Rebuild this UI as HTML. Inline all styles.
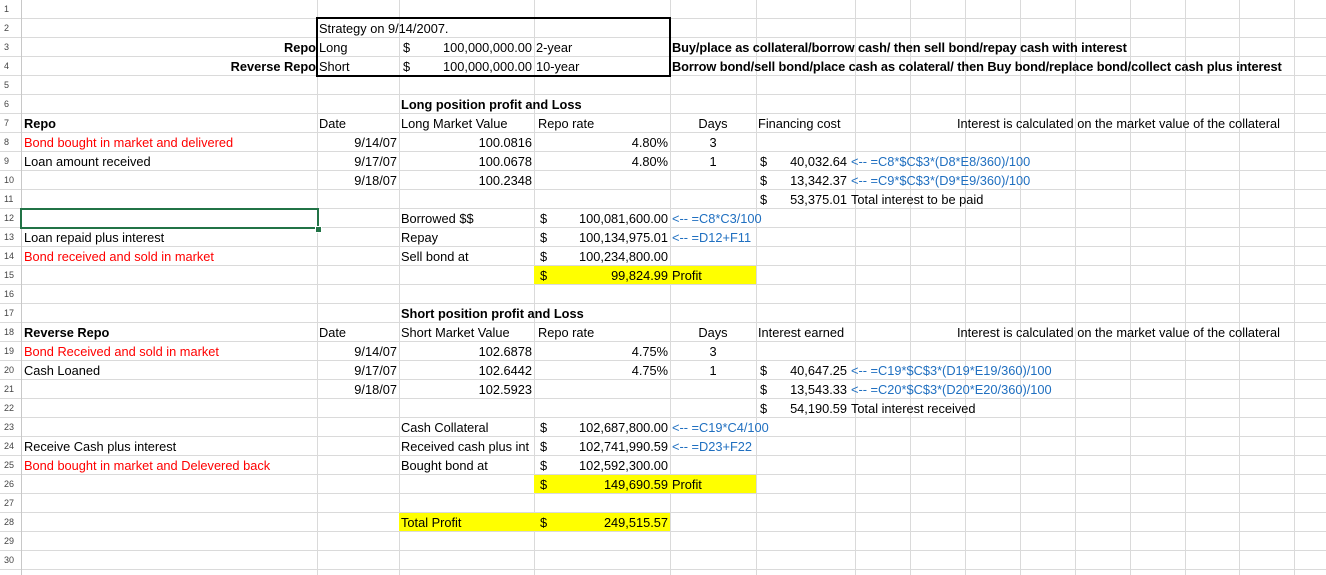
<!DOCTYPE html>
<html><head><meta charset="utf-8"><style>
body{margin:0;width:1326px;height:575px;overflow:hidden;background:#fff;font-family:"Liberation Sans",sans-serif;font-size:12.8px;color:#000;position:relative}
#g{position:absolute;left:0;top:0;width:1326px;height:575px;background-image:linear-gradient(to bottom,transparent 18px,#dadada 18px);background-size:100% 19px}
.v{position:absolute;top:0;width:1px;height:575px;background:#dadada}
.c{position:absolute;height:19px;line-height:19px;white-space:nowrap}
.r{text-align:right}.m{text-align:center}
.b{font-weight:bold}.red{color:#f00}.bl{color:#1f6fc0}
.n{position:absolute;left:4px;height:19px;line-height:19px;font-size:9px;color:#444}
.y{position:absolute;height:18px;background:#ffff00}
</style></head><body>
<div id="g"></div>
<div class="v" style="left:21px;background:#c8c8c8"></div>
<div class="v" style="left:317px"></div><div class="v" style="left:399px"></div><div class="v" style="left:534px"></div><div class="v" style="left:670px"></div><div class="v" style="left:756px"></div><div class="v" style="left:855px"></div><div class="v" style="left:910px"></div><div class="v" style="left:965px"></div><div class="v" style="left:1020px"></div><div class="v" style="left:1075px"></div><div class="v" style="left:1130px"></div><div class="v" style="left:1185px"></div><div class="v" style="left:1239px"></div><div class="v" style="left:1294px"></div>

<div class="y" style="left:534px;width:222px;top:266px"></div>
<div class="y" style="left:534px;width:222px;top:475px"></div>
<div class="y" style="left:399px;width:271px;top:513px"></div>

<div style="position:absolute;left:316px;top:17px;width:351px;height:56px;border:2px solid #000"></div>
<div style="position:absolute;left:20px;top:208px;width:295px;height:17px;border:2px solid #217346"></div>
<div style="position:absolute;left:315px;top:226px;width:5px;height:5px;background:#217346;border:1px solid #fff"></div>

<div class="n" style="top:0">1</div><div class="n" style="top:19px">2</div><div class="n" style="top:38px">3</div><div class="n" style="top:57px">4</div><div class="n" style="top:76px">5</div><div class="n" style="top:95px">6</div><div class="n" style="top:114px">7</div><div class="n" style="top:133px">8</div><div class="n" style="top:152px">9</div><div class="n" style="top:171px">10</div><div class="n" style="top:190px">11</div><div class="n" style="top:209px">12</div><div class="n" style="top:228px">13</div><div class="n" style="top:247px">14</div><div class="n" style="top:266px">15</div><div class="n" style="top:285px">16</div><div class="n" style="top:304px">17</div><div class="n" style="top:323px">18</div><div class="n" style="top:342px">19</div><div class="n" style="top:361px">20</div><div class="n" style="top:380px">21</div><div class="n" style="top:399px">22</div><div class="n" style="top:418px">23</div><div class="n" style="top:437px">24</div><div class="n" style="top:456px">25</div><div class="n" style="top:475px">26</div><div class="n" style="top:494px">27</div><div class="n" style="top:513px">28</div><div class="n" style="top:532px">29</div><div class="n" style="top:551px">30</div>

<div class="c" style="left:319px;top:19px">Strategy on 9/14/2007.</div>
<div class="c r b" style="left:21px;width:295px;top:38px">Repo</div>
<div class="c" style="left:319px;top:38px">Long</div>
<div class="c" style="left:403px;top:38px">$</div>
<div class="c r" style="left:399px;width:133px;top:38px">100,000,000.00</div>
<div class="c" style="left:536px;top:38px">2-year</div>
<div class="c b" style="left:672px;top:38px;letter-spacing:-0.08px">Buy/place as collateral/borrow cash/ then sell bond/repay cash with interest</div>
<div class="c r b" style="left:21px;width:295px;top:57px">Reverse Repo</div>
<div class="c" style="left:319px;top:57px">Short</div>
<div class="c" style="left:403px;top:57px">$</div>
<div class="c r" style="left:399px;width:133px;top:57px">100,000,000.00</div>
<div class="c" style="left:536px;top:57px">10-year</div>
<div class="c b" style="left:672px;top:57px;letter-spacing:-0.09px">Borrow bond/sell bond/place cash as colateral/ then Buy bond/replace bond/collect cash plus interest</div>

<div class="c b" style="left:401px;top:95px">Long position profit and Loss</div>
<div class="c b" style="left:24px;top:114px">Repo</div>
<div class="c" style="left:319px;top:114px">Date</div>
<div class="c" style="left:401px;top:114px">Long Market Value</div>
<div class="c" style="left:538px;top:114px">Repo rate</div>
<div class="c m" style="left:670px;width:86px;top:114px">Days</div>
<div class="c" style="left:758px;top:114px">Financing cost</div>
<div class="c" style="left:957px;top:114px">Interest is calculated on the market value of the collateral</div>

<div class="c red" style="left:24px;top:133px">Bond bought in market and delivered</div>
<div class="c r" style="left:317px;width:80px;top:133px">9/14/07</div>
<div class="c r" style="left:399px;width:133px;top:133px">100.0816</div>
<div class="c r" style="left:534px;width:134px;top:133px">4.80%</div>
<div class="c m" style="left:670px;width:86px;top:133px">3</div>

<div class="c" style="left:24px;top:152px">Loan amount received</div>
<div class="c r" style="left:317px;width:80px;top:152px">9/17/07</div>
<div class="c r" style="left:399px;width:133px;top:152px">100.0678</div>
<div class="c r" style="left:534px;width:134px;top:152px">4.80%</div>
<div class="c m" style="left:670px;width:86px;top:152px">1</div>
<div class="c" style="left:760px;top:152px">$</div>
<div class="c r" style="left:756px;width:91px;top:152px">40,032.64</div>
<div class="c bl" style="left:851px;top:152px">&lt;-- =C8*$C$3*(D8*E8/360)/100</div>

<div class="c r" style="left:317px;width:80px;top:171px">9/18/07</div>
<div class="c r" style="left:399px;width:133px;top:171px">100.2348</div>
<div class="c" style="left:760px;top:171px">$</div>
<div class="c r" style="left:756px;width:91px;top:171px">13,342.37</div>
<div class="c bl" style="left:851px;top:171px">&lt;-- =C9*$C$3*(D9*E9/360)/100</div>

<div class="c" style="left:760px;top:190px">$</div>
<div class="c r" style="left:756px;width:91px;top:190px">53,375.01</div>
<div class="c" style="left:851px;top:190px">Total interest to be paid</div>

<div class="c" style="left:401px;top:209px">Borrowed $$</div>
<div class="c" style="left:540px;top:209px">$</div>
<div class="c r" style="left:534px;width:134px;top:209px">100,081,600.00</div>
<div class="c bl" style="left:672px;top:209px">&lt;-- =C8*C3/100</div>

<div class="c" style="left:24px;top:228px">Loan repaid plus interest</div>
<div class="c" style="left:401px;top:228px">Repay</div>
<div class="c" style="left:540px;top:228px">$</div>
<div class="c r" style="left:534px;width:134px;top:228px">100,134,975.01</div>
<div class="c bl" style="left:672px;top:228px">&lt;-- =D12+F11</div>

<div class="c red" style="left:24px;top:247px">Bond received and sold in market</div>
<div class="c" style="left:401px;top:247px">Sell bond at</div>
<div class="c" style="left:540px;top:247px">$</div>
<div class="c r" style="left:534px;width:134px;top:247px">100,234,800.00</div>

<div class="c" style="left:540px;top:266px">$</div>
<div class="c r" style="left:534px;width:134px;top:266px">99,824.99</div>
<div class="c" style="left:672px;top:266px">Profit</div>

<div class="c b" style="left:401px;top:304px">Short position profit and Loss</div>
<div class="c b" style="left:24px;top:323px">Reverse Repo</div>
<div class="c" style="left:319px;top:323px">Date</div>
<div class="c" style="left:401px;top:323px">Short Market Value</div>
<div class="c" style="left:538px;top:323px">Repo rate</div>
<div class="c m" style="left:670px;width:86px;top:323px">Days</div>
<div class="c" style="left:758px;top:323px">Interest earned</div>
<div class="c" style="left:957px;top:323px">Interest is calculated on the market value of the collateral</div>

<div class="c red" style="left:24px;top:342px">Bond Received and sold in market</div>
<div class="c r" style="left:317px;width:80px;top:342px">9/14/07</div>
<div class="c r" style="left:399px;width:133px;top:342px">102.6878</div>
<div class="c r" style="left:534px;width:134px;top:342px">4.75%</div>
<div class="c m" style="left:670px;width:86px;top:342px">3</div>

<div class="c" style="left:24px;top:361px">Cash Loaned</div>
<div class="c r" style="left:317px;width:80px;top:361px">9/17/07</div>
<div class="c r" style="left:399px;width:133px;top:361px">102.6442</div>
<div class="c r" style="left:534px;width:134px;top:361px">4.75%</div>
<div class="c m" style="left:670px;width:86px;top:361px">1</div>
<div class="c" style="left:760px;top:361px">$</div>
<div class="c r" style="left:756px;width:91px;top:361px">40,647.25</div>
<div class="c bl" style="left:851px;top:361px">&lt;-- =C19*$C$3*(D19*E19/360)/100</div>

<div class="c r" style="left:317px;width:80px;top:380px">9/18/07</div>
<div class="c r" style="left:399px;width:133px;top:380px">102.5923</div>
<div class="c" style="left:760px;top:380px">$</div>
<div class="c r" style="left:756px;width:91px;top:380px">13,543.33</div>
<div class="c bl" style="left:851px;top:380px">&lt;-- =C20*$C$3*(D20*E20/360)/100</div>

<div class="c" style="left:760px;top:399px">$</div>
<div class="c r" style="left:756px;width:91px;top:399px">54,190.59</div>
<div class="c" style="left:851px;top:399px">Total interest received</div>

<div class="c" style="left:401px;top:418px">Cash Collateral</div>
<div class="c" style="left:540px;top:418px">$</div>
<div class="c r" style="left:534px;width:134px;top:418px">102,687,800.00</div>
<div class="c bl" style="left:672px;top:418px">&lt;-- =C19*C4/100</div>

<div class="c" style="left:24px;top:437px">Receive Cash plus interest</div>
<div class="c" style="left:401px;top:437px">Received cash plus int</div>
<div class="c" style="left:540px;top:437px">$</div>
<div class="c r" style="left:534px;width:134px;top:437px">102,741,990.59</div>
<div class="c bl" style="left:672px;top:437px">&lt;-- =D23+F22</div>

<div class="c red" style="left:24px;top:456px">Bond bought in market and Delevered back</div>
<div class="c" style="left:401px;top:456px">Bought bond at</div>
<div class="c" style="left:540px;top:456px">$</div>
<div class="c r" style="left:534px;width:134px;top:456px">102,592,300.00</div>

<div class="c" style="left:540px;top:475px">$</div>
<div class="c r" style="left:534px;width:134px;top:475px">149,690.59</div>
<div class="c" style="left:672px;top:475px">Profit</div>

<div class="c" style="left:401px;top:513px">Total Profit</div>
<div class="c" style="left:540px;top:513px">$</div>
<div class="c r" style="left:534px;width:134px;top:513px">249,515.57</div>
</body></html>
